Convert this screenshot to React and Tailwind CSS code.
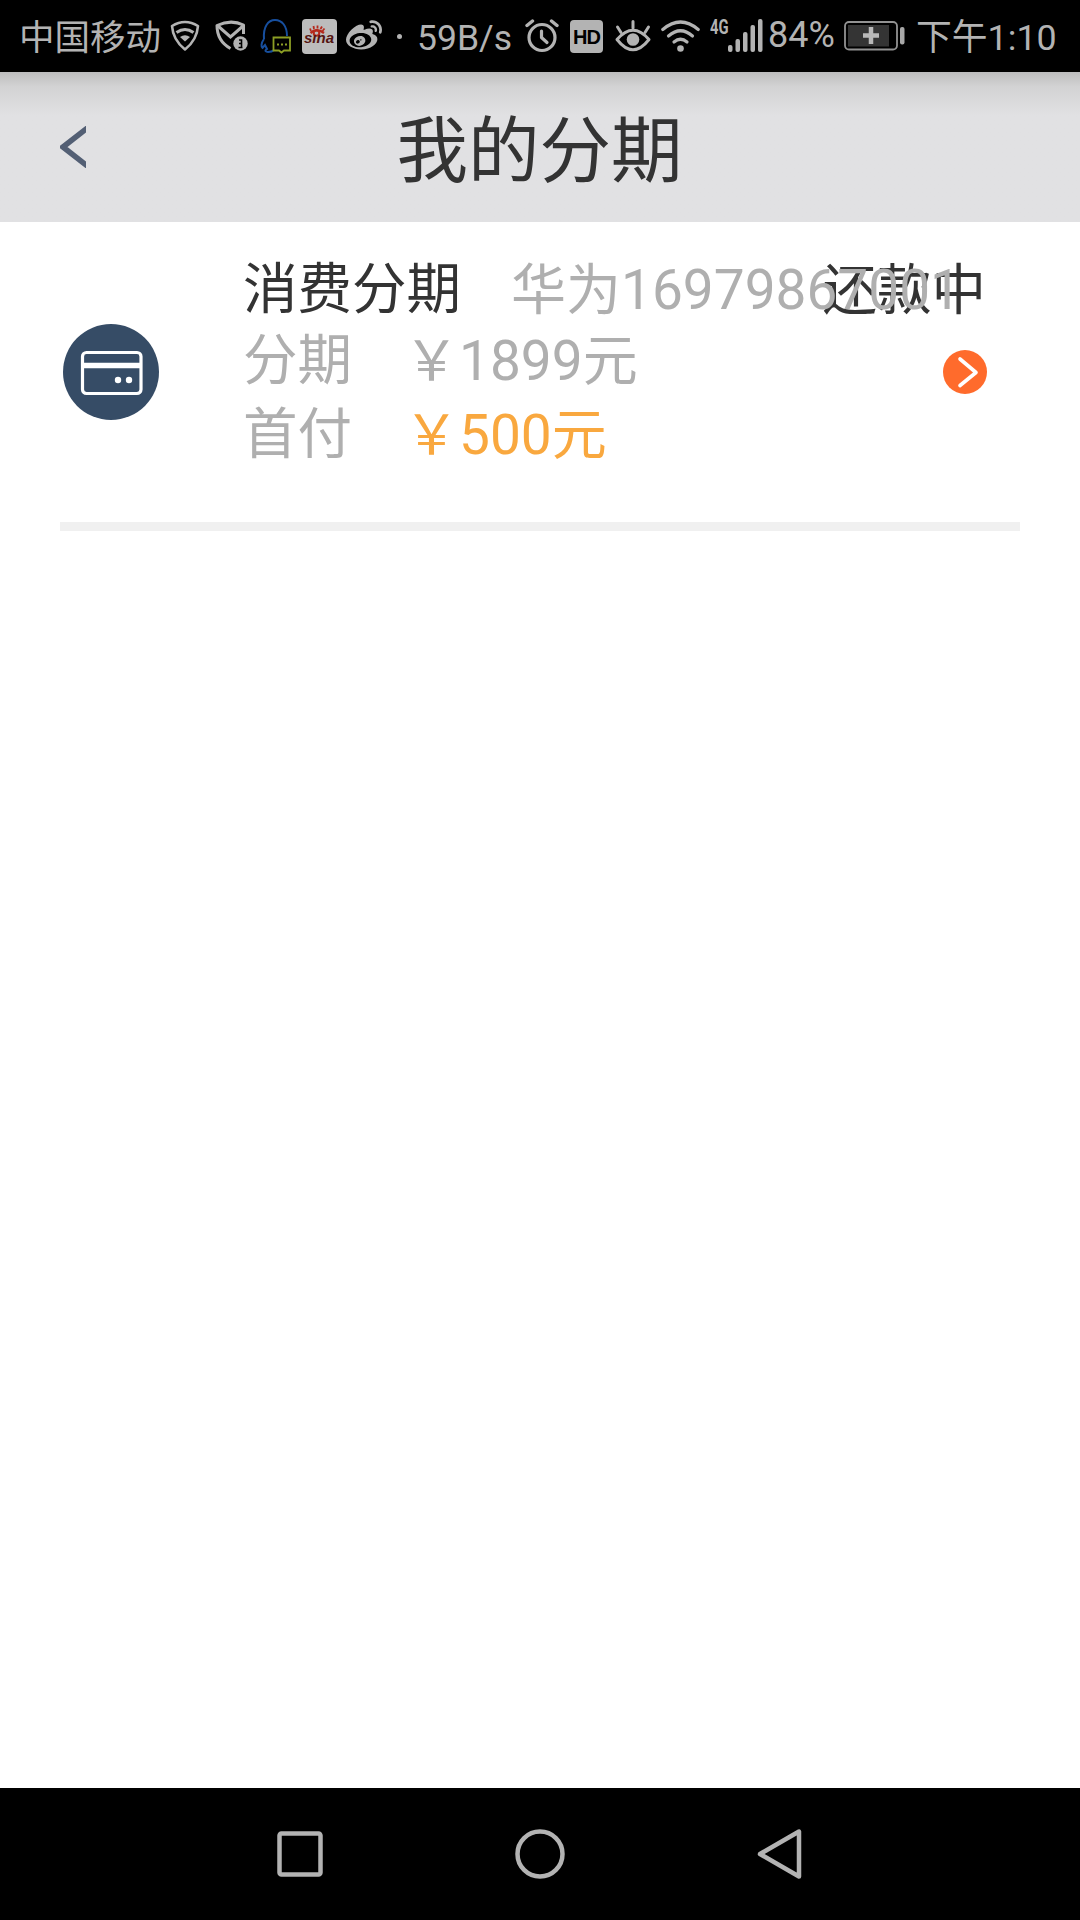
import { FaWeibo } from "react-icons/fa";

const records = [
  {
    id: 1,
    type: "消费分期",
    product: "华为16979867001",
    status: "还款中",
    total: "￥1899元",
    downPayment: "￥500元",
  },
];

function ShieldWifiIcon() {
  return (
    <svg className="ml-[10px] h-[32px] w-[30px] shrink-0" viewBox="0 0 30 32" fill="none" stroke="currentColor">
      <path d="M2 6Q15 -2 28 6Q27 20 15 29.500Q3 20 2 6Z" strokeWidth="2.600" strokeLinejoin="round" />
      <path d="M6.500 12.500Q15 6.500 23.500 12.500" strokeWidth="3" />
      <path d="M10 17Q15 13.500 20 17L15 21.500Z" fill="currentColor" stroke="none" />
    </svg>
  );
}

function ShieldMailIcon() {
  return (
    <svg className="ml-[15px] h-[32px] w-[34px] shrink-0" viewBox="0 0 34 32" fill="none" stroke="currentColor">
      <path d="M28.500 14V5Q16 -1 2 5.500Q2 21 15.500 28.500" strokeWidth="3" strokeLinejoin="round" />
      <path d="M3 6L15.500 17L28 6" strokeWidth="3" />
      <circle cx="25.500" cy="23.500" r="7.200" fill="currentColor" stroke="none" />
      <path d="M24 20H26.500V27M24 23.500H26.500M23.500 27.500H27.500" stroke="#000" strokeWidth="1.600" />
    </svg>
  );
}

function QQIcon() {
  return (
    <svg className="ml-[11px] h-[36px] w-[32px] shrink-0" viewBox="0 0 32 36" fill="none">
      <path
        d="M4 21C3 9 8 2 15 2S27 8 27 18M4 21C1 25 1 29 2.500 30L5 27L7 31C4 33 6 34 8 34Q12 34 14 32"
        stroke="#174f9e"
        strokeWidth="2"
      />
      <path d="M13.500 19.500H30V32.500H24L21.500 34.500L19 32.500H13.500Z" stroke="#8c9e24" strokeWidth="1.800" />
      <path d="M17 26.500H19M21 26.500H23M25 26.500H27" stroke="#8c9e24" strokeWidth="2.200" />
    </svg>
  );
}

function SinaIcon() {
  return (
    <svg className="ml-[10px] h-[35px] w-[35px] shrink-0" viewBox="0 0 35 35" fill="none">
      <rect width="35" height="35" rx="4" fill="#bcbcbc" />
      <path d="M8.500 14Q14.500 8.500 22 14" stroke="#b5291c" strokeWidth="2.400" />
      <path d="M9 12L8 9.500M12 10L11.500 7M15.500 9.500V6.500M18.500 10L20 7.500M20.500 12L22.500 9.500" stroke="#b5291c" strokeWidth="1.800" />
      <circle cx="14.500" cy="14" r="2.800" stroke="#b5291c" strokeWidth="2" />
      <text
        x="2"
        y="24"
        textLength="30"
        lengthAdjust="spacingAndGlyphs"
        className="font-['Liberation_Sans',sans-serif] text-[15px] font-bold italic"
        fill="#551512"
      >
        sına
      </text>
    </svg>
  );
}

function AlarmIcon() {
  return (
    <svg className="h-[34px] w-[34px] shrink-0" viewBox="0 0 34 34" fill="none" stroke="currentColor">
      <circle cx="17" cy="18.500" r="13" strokeWidth="3.200" />
      <path d="M2 6.500L7.500 2M32 6.500L26.500 2" strokeWidth="3.400" strokeLinecap="round" />
      <path d="M16.500 12V18.500L22 23.500" strokeWidth="3.200" strokeLinecap="round" strokeLinejoin="round" />
    </svg>
  );
}

function EyeIcon() {
  return (
    <svg className="ml-[12px] h-[32px] w-[36px] shrink-0" viewBox="0 0 36 32" fill="none" stroke="currentColor">
      <path d="M2 19.500Q18 1 34 19.500Q18 40 2 19.500Z" strokeWidth="3" strokeLinejoin="round" />
      <circle cx="18" cy="19.500" r="6.300" fill="currentColor" stroke="none" />
      <path d="M18 1.500V8M2.500 7L6 12.500M33.500 7L30 12.500" strokeWidth="3" strokeLinecap="round" />
    </svg>
  );
}

function WifiIcon() {
  return (
    <svg className="ml-[10px] h-[33px] w-[39px] shrink-0" viewBox="0 0 39 33" fill="none" stroke="currentColor">
      <path d="M1.800 9.500Q19.500 -5.500 37.200 9.500" strokeWidth="3.200" strokeLinecap="round" />
      <path d="M7.500 16Q19.500 5.500 31.500 16" strokeWidth="3.200" strokeLinecap="round" />
      <path d="M13 22Q19.500 16.500 26 22" strokeWidth="3.200" strokeLinecap="round" />
      <circle cx="19.500" cy="28.500" r="3.300" fill="currentColor" stroke="none" />
    </svg>
  );
}

function SignalIcon() {
  return (
    <svg className="-ml-px h-[34px] w-[36px] shrink-0" viewBox="0 0 36 34" fill="currentColor">
      <rect x="0" y="26" width="4.500" height="7" rx="2" />
      <rect x="7.500" y="20" width="4.500" height="13" rx="2" />
      <rect x="15" y="13" width="4.500" height="20" rx="2" />
      <rect x="22.500" y="6" width="4.500" height="27" rx="2" />
      <rect x="30" y="0" width="4.500" height="33" rx="2" />
    </svg>
  );
}

function BatteryIcon() {
  return (
    <svg className="h-[30px] w-[61px] shrink-0" viewBox="0 0 61 30" fill="none">
      <rect x="1" y="1" width="52" height="27.500" rx="4" stroke="#929292" strokeWidth="1.800" />
      <rect x="4" y="4" width="41" height="21.500" fill="#343434" />
      <path d="M27 6V23M19 14.500H35" stroke="#b8b8b8" strokeWidth="4.500" />
      <rect x="56" y="6" width="4.500" height="17.500" rx="2" fill="#a8a8a8" />
    </svg>
  );
}

function StatusBar() {
  return (
    <header className="flex h-[72px] items-center bg-black pl-[19px] text-[36px] leading-[72px] whitespace-nowrap text-[#b3b3b3]">
      <span className="w-[141px] shrink-0 pt-[4px] text-[35.5px]">中国移动</span>
      <ShieldWifiIcon />
      <ShieldMailIcon />
      <QQIcon />
      <SinaIcon />
      <FaWeibo className="ml-[9px] size-[36px] shrink-0" />
      <span className="ml-[15px] size-[5px] shrink-0 rounded-full bg-[#b3b3b3]" />
      <span className="ml-[15px] w-[108px] shrink-0 pt-[4px] text-[35.5px]">59B/s</span>
      <AlarmIcon />
      <span className="ml-[11px] h-[33px] w-[33px] shrink-0 rounded-[4px] bg-[#b3b3b3] text-center font-['Liberation_Sans',sans-serif] text-[20px] leading-[34px] font-bold tracking-[-1px] text-black">
        HD
      </span>
      <EyeIcon />
      <WifiIcon />
      <span className="mb-[18px] ml-[10px] w-[19px] shrink-0 origin-left scale-x-[0.74] text-[20px] leading-[20px] font-bold">4G</span>
      <SignalIcon />
      <span className="mb-[3px] ml-[4px] w-[76px] shrink-0 text-[36px] leading-[68px]">84%</span>
      <BatteryIcon />
      <span className="ml-[11px] pt-[4px] text-[35.8px]">下午1:10</span>
    </header>
  );
}

function TitleBar() {
  return (
    <div className="flex h-[150px] items-center bg-[#e1e1e3] bg-linear-to-b from-[#bdbdbd] via-[#d3d3d4] via-[15px] to-[#e1e1e3] to-[44px] px-[60px]">
      <button className="w-[26px]" aria-label="返回">
        <svg className="-mt-px h-[42px] w-[26px]" viewBox="0 0 26 42" fill="none">
          <path d="M28 1.500L3 21L28 40.500" stroke="#535f74" strokeWidth="5.500" />
        </svg>
      </button>
      <h1 className="flex-1 pt-[10px] pr-[27px] text-center text-[71.5px] leading-[100px] text-[#333]">我的分期</h1>
    </div>
  );
}

function RecordItem({ record }) {
  return (
    <li className="mx-[60px] flex h-[309px] border-b-[9px] border-[#f0f0f0] pl-[3px] text-[55px]">
      <svg className="mt-[102px] size-[96px] shrink-0" viewBox="0 0 96 96" fill="none">
        <circle cx="48" cy="48" r="48" fill="#364c66" />
        <rect x="19.500" y="28.500" width="58.500" height="41" rx="4" stroke="#fff" strokeWidth="3.200" />
        <path d="M19 41.500H79" stroke="#fff" strokeWidth="5.500" />
        <circle cx="55" cy="56" r="3.200" fill="#fff" />
        <circle cx="66" cy="56" r="3.200" fill="#fff" />
      </svg>
      <div className="ml-[84px] w-[579px] shrink-0 pt-[34px] whitespace-nowrap text-[#afafaf]">
        <div className="relative z-10 flex h-[68px] items-center">
          <span className="w-[268px] shrink-0 text-[54.5px] text-[#333]">{record.type}</span>
          <span>{record.product}</span>
        </div>
        <div className="flex h-[74px] items-center">
          <span className="w-[161px] shrink-0 text-[54.5px]">分期</span>
          <span>{record.total}</span>
        </div>
        <div className="flex h-[74px] items-center">
          <span className="w-[161px] shrink-0 text-[54.5px]">首付</span>
          <span className="text-[#f9a83f]">{record.downPayment}</span>
        </div>
      </div>
      <div className="flex w-[165px] shrink-0 flex-col items-end pt-[34px] whitespace-nowrap">
        <span className="h-[68px] pr-px text-[54.5px] leading-[68px] text-[#333]">{record.status}</span>
        <svg className="mt-[26px] size-[44px]" viewBox="0 0 44 44" fill="none">
          <circle cx="22" cy="22" r="22" fill="#ff6b2c" />
          <path d="M17 9L33 22.500L17 35.500" stroke="#fff" strokeWidth="3.600" strokeLinecap="round" strokeLinejoin="round" />
        </svg>
      </div>
    </li>
  );
}

function NavBar() {
  return (
    <nav className="flex h-[132px] items-center justify-center gap-[190px] bg-black text-[#b3b3b3]">
      <svg className="size-[50px]" viewBox="0 0 50 50" fill="none" stroke="currentColor" strokeWidth="4.500">
        <rect x="4.500" y="4.500" width="41" height="41" rx="2" />
      </svg>
      <svg className="size-[50px]" viewBox="0 0 50 50" fill="none" stroke="currentColor" strokeWidth="4.500">
        <circle cx="25" cy="25" r="22.500" />
      </svg>
      <svg className="size-[50px]" viewBox="0 0 50 50" fill="none" stroke="currentColor" strokeWidth="4.500" strokeLinejoin="round">
        <path d="M5 25L44 2.500V47.500Z" />
      </svg>
    </nav>
  );
}

export default function App() {
  return (
    <div className="flex h-[1920px] w-[1080px] flex-col overflow-hidden bg-white font-[Roboto,'Noto_Sans_CJK_SC',sans-serif]">
      <StatusBar />
      <TitleBar />
      <ul className="flex-1">
        {records.map((record) => (
          <RecordItem key={record.id} record={record} />
        ))}
      </ul>
      <NavBar />
    </div>
  );
}
